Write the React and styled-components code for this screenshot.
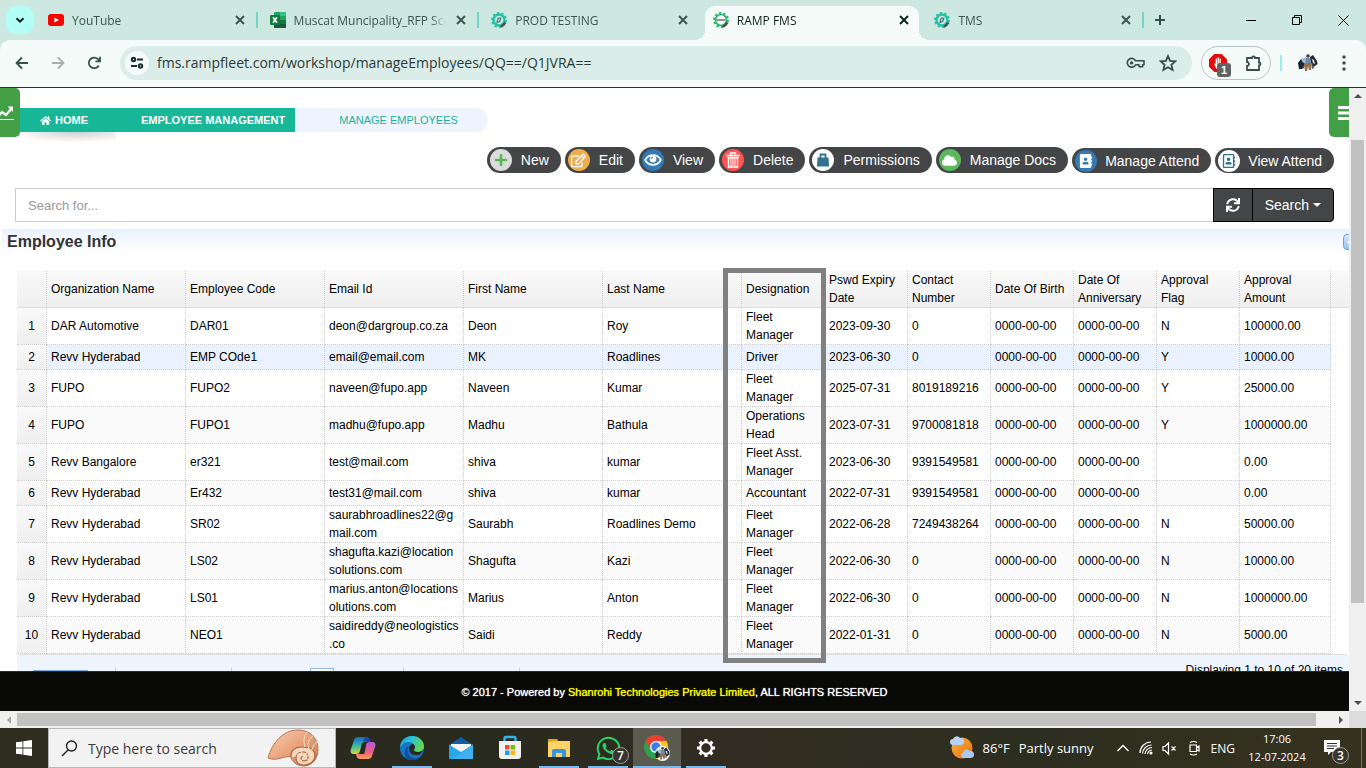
import styled, { createGlobalStyle, css } from "styled-components";
import {
  FaAddressBook,
  FaCloud,
  FaHome,
  FaPlus,
  FaRegAddressBook,
  FaRegEdit,
  FaSync,
  FaWhatsapp,
} from "react-icons/fa";

const GlobalStyle = createGlobalStyle`
  * {
    box-sizing: border-box;
  }
  html, body, #root {
    height: 100%;
  }
  body {
    margin: 0;
    overflow: hidden;
    background: #fff;
    font-family: "Liberation Sans", Arial, sans-serif;
  }
  button, input, select {
    font-family: inherit;
    margin: 0;
  }
  svg {
    display: block;
    flex: none;
  }
`;

const uiFont = `"Open Sans", "Noto Sans", sans-serif`;

const Screen = styled.div`
  display: flex;
  flex-direction: column;
  height: 100vh;
`;

/* browser window */

const TabStrip = styled.header`
  display: flex;
  align-items: center;
  height: 40px;
  flex: none;
  padding-left: 6px;
  background: #cce8e1;
  font-family: ${uiFont};
`;

const PlainButton = styled.button`
  display: flex;
  align-items: center;
  justify-content: center;
  flex: none;
  width: ${({ $w }) => $w || 28}px;
  height: ${({ $h }) => $h || 28}px;
  padding: 0;
  border: none;
  border-radius: ${({ $radius }) => $radius || 0}px;
  background: ${({ $bg }) => $bg || "transparent"};
  color: ${({ $color }) => $color || "#35504a"};
  cursor: pointer;
`;

const Tabs = styled.div`
  display: flex;
  flex: 1 1 auto;
  max-width: 1110px;
  height: 100%;
  padding: 6px 0 0 2px;
`;

const Tab = styled.div`
  position: relative;
  display: flex;
  align-items: center;
  flex: 1 1 0;
  min-width: 0;
  gap: 8px;
  padding: 0 11px 6px 12px;
  color: #3b5650;

  ${({ $divider }) =>
    $divider &&
    css`
      &::after {
        content: "";
        position: absolute;
        right: 0;
        top: 6px;
        width: 2px;
        height: 16px;
        background: #74d6c8;
      }
    `}

  ${({ $active }) =>
    $active &&
    css`
      margin: 0 3px 0 4px;
      padding: 0 8px 6px;
      border-radius: 10px 10px 0 0;
      background: #f4fbf9;
      color: #10201c;
      &::before,
      &::after {
        content: "";
        position: absolute;
        bottom: 0;
        width: 10px;
        height: 10px;
      }
      &::before {
        right: 100%;
        background: radial-gradient(circle at 0 0, #cce8e1 10px, #f4fbf9 10px);
      }
      &::after {
        left: 100%;
        background: radial-gradient(
          circle at 100% 0,
          #cce8e1 10px,
          #f4fbf9 10px
        );
      }
    `}
`;

const TabTitle = styled.span`
  flex: 1;
  min-width: 0;
  padding-top: 2px;
  overflow: hidden;
  white-space: nowrap;
  font-size: 12px;
  line-height: 16px;
  mask-image: linear-gradient(90deg, #000 90%, transparent);
`;

const WindowButtons = styled.div`
  display: flex;
  margin-left: auto;
`;

const AddressRow = styled.div`
  background: #cce8e1;
  flex: none;
`;

const Toolbar = styled.div`
  display: flex;
  align-items: center;
  height: 48px;
  padding: 0 0 2px 4px;
  border-radius: 10px 10px 0 0;
  border-bottom: 1px solid #2c2f33;
  background: #f4fbf9;
`;

const Omnibox = styled.div`
  display: flex;
  align-items: center;
  flex: 1;
  height: 34px;
  margin: 0 9px 0 8px;
  padding: 0 8px 0 5px;
  border-radius: 17px;
  background: #dbede8;
`;

const UrlInput = styled.input`
  flex: 1;
  min-width: 0;
  height: 24px;
  padding: 0 0 0 8px;
  border: none;
  outline: none;
  background: transparent;
  color: #2c3b38;
  font-family: ${uiFont};
  font-size: 14px;
`;

const Extensions = styled.div`
  display: flex;
  align-items: center;
  justify-content: space-between;
  width: 70px;
  height: 34px;
  padding: 0 2px;
  border: 1px solid #b9c5c2;
  border-radius: 17px;
`;

const ToolbarRule = styled.span`
  width: 2px;
  height: 16px;
  margin: 0 12px 0 9px;
  background: #93f0e2;
`;

const BadgeHolder = styled.span`
  position: relative;
  display: flex;
`;

const Badge = styled.span`
  position: absolute;
  left: 8px;
  top: 9px;
  width: 14px;
  height: 14px;
  border-radius: 3px;
  background: #5f6362;
  color: #fff;
  font-size: 11px;
  font-weight: bold;
  line-height: 14px;
  text-align: center;
`;

/* page */

const Viewport = styled.div`
  display: grid;
  grid-template-columns: minmax(0, 1fr) 17px;
  grid-template-rows: minmax(0, 1fr) 17px;
  flex: 1;
  min-height: 0;
`;

const Page = styled.div`
  position: relative;
  display: flex;
  flex-direction: column;
  min-height: 0;
  overflow: hidden;
  background: #fff;
`;

const PageContent = styled.main`
  flex: 1;
  min-height: 0;
  overflow: hidden;
  padding-top: 20px;
`;

const SideTab = styled.button`
  position: absolute;
  z-index: 2;
  top: 0;
  ${({ $side }) => $side}: 0;
  display: flex;
  align-items: center;
  justify-content: flex-start;
  width: 20px;
  height: 49px;
  padding: 0;
  padding-left: ${({ $side }) => ($side === "right" ? "9px" : "0")};
  border: none;
  border-radius: ${({ $side }) =>
    $side === "right" ? "5px 0 0 5px" : "0 5px 5px 0"};
  background: #439f46;
  color: #fff;
  overflow: hidden;
`;

const Breadcrumb = styled.nav`
  display: flex;
  width: max-content;
  margin-left: 15px;
`;

const Crumb = styled.a`
  position: relative;
  display: flex;
  align-items: center;
  gap: 4px;
  height: 24px;
  padding: ${({ $pad }) => $pad};
  background: #17b798;
  color: #fff;
  font-size: 11px;
  font-weight: bold;
  text-decoration: none;

  ${({ $current }) =>
    $current &&
    css`
      border-radius: 0 12px 12px 0;
      background: #edf4ff;
      color: #1fb297;
      font-weight: normal;
    `}

  ${({ $shadow }) =>
    $shadow &&
    css`
      &::after {
        content: "";
        position: absolute;
        left: 0;
        right: 0;
        top: 100%;
        height: 10px;
        background: radial-gradient(
          ellipse at 60% 0,
          #cfcfcf,
          #efefef 50%,
          #fff 75%
        );
      }
    `}
`;

const Actions = styled.div`
  display: flex;
  align-items: flex-end;
  justify-content: flex-end;
  gap: 4px;
  margin: 15px 15px 0;
`;

const ActionButton = styled.button`
  display: flex;
  align-items: center;
  gap: ${({ $compact }) => ($compact ? 8 : 9)}px;
  height: ${({ $compact }) => ($compact ? 25 : 26)}px;
  padding: 0 12px 0 3px;
  border: none;
  border-radius: 13px;
  background: #444546;
  color: #fff;
  font-size: 14px;
  white-space: nowrap;
  cursor: pointer;
`;

const ActionIcon = styled.span`
  display: flex;
  align-items: center;
  justify-content: center;
  width: 22px;
  height: 22px;
  border-radius: 50%;
  background: ${({ $bg }) => $bg};
  color: ${({ $color }) => $color || "#fff"};
`;

const SearchForm = styled.form`
  display: flex;
  height: 34px;
  margin: 15px 15px 0;
`;

const SearchInput = styled.input`
  flex: 1;
  min-width: 0;
  padding: 0 12px;
  border: 1px solid #ccc;
  border-right: none;
  outline: none;
  font-size: 13px;
  &::placeholder {
    color: #999;
    opacity: 1;
  }
`;

const SearchButton = styled.button`
  display: flex;
  align-items: center;
  justify-content: center;
  gap: 4px;
  padding: 0 12px;
  border: 1px solid #000;
  border-radius: ${({ $last }) => ($last ? "0 4px 4px 0" : "0")};
  margin-left: ${({ $last }) => ($last ? "-1px" : "0")};
  background: #444546;
  color: #fff;
  font-size: 14px;
  cursor: pointer;
`;

const Caret = styled.span`
  border: 4px solid transparent;
  border-top-color: #fff;
  border-bottom: none;
`;

const PanelHeader = styled.div`
  position: relative;
  height: 24px;
  margin: 7px 0 0 2px;
  padding-left: 5px;
  background: linear-gradient(#eaf2ff, #fff);
`;

const PanelTitle = styled.h2`
  margin: 0;
  color: #333;
  font-size: 16px;
  line-height: 26px;
`;

const CollapseButton = styled.button`
  position: absolute;
  right: -10px;
  top: 5px;
  width: 16px;
  height: 16px;
  padding: 0 0 0 3px;
  border: 1px solid #6f9fd8;
  border-radius: 4px;
  background: linear-gradient(#d6e7fb, #9cc3f3);
  color: #fff;
`;

const GridArea = styled.div`
  position: relative;
  margin: 18px 0 0 17px;
`;

const Grid = styled.table`
  width: 100%;
  table-layout: fixed;
  border-spacing: 0;
  color: #000;
  font-size: 12px;
  line-height: 18px;
`;

const HeadCell = styled.th`
  height: 37px;
  padding: 0 4px;
  border-right: ${({ $filler }) => ($filler ? "none" : "1px dotted #ccc")};
  border-bottom: 1px solid #ddd;
  background: linear-gradient(#f9f9f9, #efefef);
  font-weight: normal;
  text-align: left;
`;

const Row = styled.tr`
  background: ${({ $hover, $even }) =>
    $hover ? "#eaf2ff" : $even ? "#fafafa" : "#fff"};
`;

const Cell = styled.td`
  height: 25px;
  padding: 0 4px;
  border-right: 1px dotted #ccc;
  border-bottom: 1px dotted #ccc;
  overflow-wrap: anywhere;
`;

const RowNumber = styled(Cell)`
  padding: 0;
  background: linear-gradient(#f9f9f9, #efefef);
  text-align: center;
`;

const Filler = styled.td`
  background: #fff;
`;

const ColumnMarker = styled.div`
  position: absolute;
  left: 706px;
  top: -3px;
  bottom: -9px;
  width: 103px;
  border: 5px solid #808080;
  pointer-events: none;
`;

const Pager = styled.div`
  display: flex;
  align-items: center;
  height: 31px;
  margin-left: 17px;
  padding: 0 6px 0 16px;
  border-top: 1px solid #ddd;
  border-radius: 5px 5px 0 0;
  background: #eff5ff;
  font-size: 12px;
`;

const PageSize = styled.select`
  width: 55px;
  height: 20px;
  margin-top: 20px;
  border: 1px solid #7fa9dc;
  background: #fff;
`;

const PagerRule = styled.span`
  width: 1px;
  height: 24px;
  margin-top: 20px;
  margin-left: ${({ $before }) => $before}px;
  background: #ccc;
`;

const PageNumber = styled.input`
  width: 24px;
  height: 24px;
  margin: 20px 0 0 78px;
  padding: 0 4px;
  border: 1px solid #95b8e7;
`;

const PagerInfo = styled.span`
  margin-left: auto;
`;

const Footer = styled.footer`
  display: flex;
  align-items: center;
  justify-content: center;
  height: 40px;
  flex: none;
  border-top: 1px solid #2a2a2a;
  background: #090907;
  color: #fff;
  font-size: 11px;
  text-shadow: 0 0 1px currentColor;
  p {
    margin: 0;
  }
  a {
    color: #ff0;
    text-decoration: none;
  }
`;

/* scrollbars */

const ScrollTrack = styled.div`
  display: flex;
  flex-direction: ${({ $vertical }) => ($vertical ? "column" : "row")};
  padding: ${({ $vertical }) => ($vertical ? "0 2px" : "2px 0")};
  background: #f0f0f0;
`;

const ScrollArrow = styled.button`
  display: flex;
  align-items: center;
  justify-content: center;
  flex: none;
  width: ${({ $vertical }) => ($vertical ? 13 : 17)}px;
  height: ${({ $vertical }) => ($vertical ? 17 : 13)}px;
  padding: 0;
  border: none;
  background: transparent;
  color: ${({ $dim }) => ($dim ? "#a3a3a3" : "#505050")};
`;

const ScrollSpace = styled.div`
  flex: ${({ $size }) => $size} 1 0;
  background: ${({ $thumb }) => ($thumb ? "#c1c1c1" : "transparent")};
`;

const ScrollCorner = styled.div`
  background: #dcdcdc;
`;

/* taskbar */

const Taskbar = styled.div`
  display: flex;
  align-items: stretch;
  height: 40px;
  flex: none;
  background: linear-gradient(90deg, #2f2c20, #292a1e 35%, #322d22 55%, #2c2e20 75%, #36321f);
  color: #fff;
  font-family: ${uiFont};
`;

const TaskSearch = styled.label`
  display: flex;
  align-items: center;
  width: 288px;
  padding: 0 14px 0 12px;
  border: 1px solid #b5b5b1;
  background: #f2f2f2;
  color: #222;
`;

const TaskSearchInput = styled.input`
  flex: 1;
  min-width: 0;
  padding: 0 0 0 10px;
  border: none;
  outline: none;
  background: transparent;
  font-family: ${uiFont};
  font-size: 14px;
  &::placeholder {
    color: #3c3c3c;
    opacity: 1;
  }
`;

const TaskApps = styled.div`
  display: flex;
  gap: 1px;
  margin-left: 3px;
`;

const TaskApp = styled.button`
  position: relative;
  display: flex;
  align-items: center;
  justify-content: center;
  width: 48px;
  padding: 0;
  border: none;
  background: ${({ $active }) => ($active ? "#5a5a4e" : "transparent")};
  color: #fff;
  &::after {
    content: "";
    position: absolute;
    bottom: 0;
    left: ${({ $active }) => ($active ? 0 : 4)}px;
    right: ${({ $active }) => ($active ? 0 : 4)}px;
    height: 2px;
    background: ${({ $running }) => ($running ? "#76b9ed" : "transparent")};
  }
`;

const CountBubble = styled.span`
  position: absolute;
  right: ${({ $right }) => $right}px;
  bottom: 4px;
  width: 17px;
  height: 17px;
  border: 1px solid #a0a09a;
  border-radius: 50%;
  background: #35352d;
  color: #fff;
  font-size: 12px;
  font-weight: 600;
  line-height: 15px;
  text-align: center;
`;

const Tray = styled.div`
  display: flex;
  align-items: center;
  margin-left: auto;
  font-size: 12px;
`;

const Weather = styled.div`
  display: flex;
  align-items: center;
  gap: 9px;
  margin-right: 22px;
  font-size: 13px;
`;

const TrayIcons = styled.div`
  display: flex;
  align-items: center;
  gap: 9px;
`;

const Clock = styled.div`
  width: 66px;
  margin-left: 9px;
  font-size: 11px;
  line-height: 18px;
  text-align: center;
`;

const Notifications = styled.button`
  position: relative;
  display: flex;
  align-items: center;
  align-self: stretch;
  width: 52px;
  padding: 0 0 0 14px;
  border: none;
  border-right: 1px solid #77756a;
  background: transparent;
  color: #fff;
  margin-right: 4px;
`;

/* icons */

const Stroke = ({ size = 16, box = 16, width = 2, d, children }) => (
  <svg
    width={size}
    height={size}
    viewBox={`0 0 ${box} ${box}`}
    fill="none"
    stroke="currentColor"
    strokeWidth={width}
    aria-hidden="true"
  >
    {d && <path d={d} />}
    {children}
  </svg>
);

const CloseIcon = () => <Stroke size={10} box={10} d="M1 1l8 8M9 1l-8 8" width={2} />;

const YouTubeIcon = () => (
  <svg width="16" height="16" viewBox="0 0 16 16">
    <rect y="2" width="16" height="12" rx="3" fill="#f00" />
    <path d="M6.3 5.4v5.2L11 8z" fill="#fff" />
  </svg>
);

const ExcelIcon = () => (
  <svg width="16" height="16" viewBox="0 0 16 16">
    <rect x="4" width="12" height="16" rx="1" fill="#21a366" />
    <path d="M10 0h5a1 1 0 0 1 1 1v3h-6z" fill="#33c481" />
    <path d="M4 8h6v4H4zM4 12h12v3a1 1 0 0 1-1 1H5a1 1 0 0 1-1-1z" fill="#185c37" />
    <path d="M10 8h6v4h-6z" fill="#107c41" />
    <rect y="3" width="10" height="10" rx="1" fill="#107c41" />
    <path d="M3 5.3l4 5.4M7 5.3l-4 5.4" stroke="#fff" strokeWidth="1.6" />
  </svg>
);

const GearLogo = ({ ramp }) => (
  <svg width="16" height="16" viewBox="0 0 16 16" fill="none">
    <circle
      cx="8"
      cy="8"
      r="7"
      stroke={ramp ? "#27b36a" : "#1fc4a4"}
      strokeWidth="2"
      strokeDasharray="2.2 2.2"
    />
    <circle
      cx="8"
      cy="8"
      r="5.5"
      fill={ramp ? "#f4fbf9" : "none"}
      stroke={ramp ? "#27b36a" : "#1fc4a4"}
      strokeWidth={ramp ? 1.6 : 2.4}
    />
    <path d="M14.500 10.500l-4.500 4.500" stroke="#4c4f50" strokeWidth="2.400" />
    {ramp ? (
      <path d="M3.500 8h9" stroke="#6d7472" strokeWidth="1.500" />
    ) : (
      <path d="M6 10.500l1.200-4.500h2.500l-1 3.500z" stroke="#427b7b" strokeWidth="1.200" />
    )}
  </svg>
);

const TuneIcon = () => (
  <Stroke size={14} box={14} width={2}>
    <circle cx="3.5" cy="3.5" r="1.7" />
    <circle cx="10.5" cy="10" r="1.7" />
    <path d="M7 3.5h6M1 10h6" />
  </Stroke>
);

const KeyIcon = () => (
  <svg width="20" height="14" viewBox="0 0 20 14" fill="none" stroke="currentColor">
    <path
      d="M9.6 4.8H18v4h-1.4v2H13v-2H9.6A4.4 4.4 0 1 1 9.6 4.8z"
      strokeWidth="1.6"
      strokeLinejoin="round"
    />
    <circle cx="5.6" cy="6.9" r="1.7" fill="currentColor" stroke="none" />
  </svg>
);

const StarIcon = () => (
  <Stroke
    size={18}
    box={18}
    width={1.8}
    d="M9 2l2.1 4.8 5.3.5-4 3.5 1.2 5.2L9 13.300l-4.600 2.700 1.200-5.200-4-3.500 5.300-.5z"
  />
);

const AdblockIcon = () => (
  <svg width="18" height="18" viewBox="0 0 16 16">
    <path d="M4.700 0h6.600L16 4.700v6.600L11.300 16H4.700L0 11.300V4.700z" fill="#e40d0d" />
    <path
      d="M6.500 10V4.500M8.200 10V3.500M9.900 10V4.500"
      stroke="#fff"
      strokeWidth="1.200"
      strokeLinecap="round"
    />
    <path d="M4.500 8.500l2 4.500h3l1.500-4z" fill="#fff" />
  </svg>
);

const PuzzleIcon = () => (
  <Stroke
    size={18}
    box={18}
    width={1.8}
    d="M2 4h5a1.500 1.500 0 0 1 3 0h4v4.500a1.500 1.500 0 0 1 0 3V16H2v-4a2 2 0 0 0 0-4z"
  />
);

const PhotoAvatar = ({ size = 20 }) => (
  <svg width={size} height={size} viewBox="0 0 20 20">
    <circle cx="10" cy="10" r="10" fill="#f1f6fa" />
    <path d="M0 10l3-4 3 1 1 6-3 3H1z" fill="#1b2230" />
    <path d="M12 4l3-2 4 6 .6 3-4 3-3-4z" fill="#252a35" />
    <path d="M3 6l5-2 2 3-5 3z" fill="#a8bccd" />
    <path d="M14 6l2 1 1 4-2-1z" fill="#dfe8ee" />
    <path d="M8 5h4l1 6H7z" fill="#6d8eb0" />
    <circle cx="10" cy="3" r="1.800" fill="#473a35" />
    <path d="M6 10h8l-1 7h-2l-1-4-1 5H7z" fill="#92714f" />
    <path d="M14 10l2 5-2 1zM4 12l2 1v3z" fill="#5c5147" />
  </svg>
);

const EyeIcon = () => (
  <svg width="18" height="12" viewBox="0 0 18 12">
    <path
      d="M1.200 6C3 2.800 5.800 1.200 9 1.200S15 2.800 16.800 6C15 9.200 12.200 10.800 9 10.800S3 9.200 1.200 6z"
      fill="none"
      stroke="currentColor"
      strokeWidth="1.800"
    />
    <circle cx="9" cy="5" r="3.400" fill="currentColor" />
    <path d="M7 5a2 2 0 0 1 2-2" stroke="#337ab7" fill="none" />
  </svg>
);

const TrashIcon = () => (
  <svg width="14" height="16" viewBox="0 0 14 16" fill="none" stroke="currentColor">
    <path d="M.5 3.500h13M4.500 3V1h5v2M2.500 6h9v9h-9z" strokeWidth="1.400" />
    <path d="M5 7v7M7 7v7M9 7v7" strokeWidth="1" />
    <path d="M1 5.200h12" strokeWidth="1" />
  </svg>
);

const LockIcon = () => (
  <svg width="14" height="16" viewBox="0 0 14 16">
    <path d="M4.500 7V2.500h5V7" fill="none" stroke="#31708f" strokeWidth="1.800" />
    <path d="M1.500 5.500h11l.5 9H1z" fill="#31708f" />
  </svg>
);

const TrendIcon = () => (
  <svg width="15" height="16" viewBox="0 0 15 16" fill="none" stroke="#fff">
    <path d="M-2 12l4-5 4 3 6-7" strokeWidth="2.200" />
    <path d="M7.500 1.500H13v5.500z" fill="#fff" stroke="none" />
    <path d="M0 14.500h14" strokeWidth="1.200" />
  </svg>
);

const MenuIcon = () => (
  <svg width="16" height="14" viewBox="0 0 16 14" fill="currentColor">
    <path d="M0 0h16v3H0zM0 5.500h16v3H0zM0 11h16v3H0z" />
  </svg>
);

const arrows = {
  up: "M0 5l4-4 4 4z",
  down: "M0 2l4 4 4-4z",
  left: "M6 0L2 4l4 4z",
  right: "M2 0l4 4-4 4z",
};

const Arrow = ({ dir }) => (
  <svg width="8" height="8" viewBox="0 0 8 8" fill="currentColor">
    <path d={arrows[dir]} />
  </svg>
);

const WindowsIcon = () => (
  <svg width="16" height="16" viewBox="0 0 16 16" fill="#fff">
    <path d="M0 2.300L6.500 1.400v6.100H0zM7.300 1.300L16 0v7.500H7.300zM0 8.400h6.500v6.200L0 13.700zM7.300 8.400H16V16l-8.700-1.300z" />
  </svg>
);

const NautilusIcon = () => (
  <svg width="54" height="38" viewBox="0 0 54 38">
    <defs>
      <linearGradient id="shell" x1="0" y1="0" x2="1" y2="1">
        <stop offset="0" stopColor="#f7cfb2" />
        <stop offset="0.5" stopColor="#e9a27b" />
        <stop offset="1" stopColor="#c9794f" />
      </linearGradient>
    </defs>
    <path
      d="M1 29C5 14 16 1 31 1c12 0 20 8 20 19 0 10-6 17-14 17-7 0-12-4-13-9-7-2-14 5-23 1z"
      fill="url(#shell)"
      stroke="#b87450"
    />
    <path
      d="M24 28c-1-7 5-10 11-10 8 0 13 3 13 9 0 5-5 9-11 9-5 0-8-3-8-7s3-6 7-6c3 0 5 2 5 5s-2 4-4 4c-3 0-4-4-1-5"
      fill="#f5d5ba"
      stroke="#a7643f"
      strokeWidth="1.200"
    />
    <path
      d="M42 20c-2-6 0-10 4-13M45 21c0-3 2-6 5-8M38 18c-2-6-1-11 2-15M29 25l7 2M33 19l2 6M42 19l-3 6M47 24l-7 3M44 33l-5-4M33 34l3-5"
      fill="none"
      stroke="#fbe3cf"
      strokeWidth="0.900"
    />
  </svg>
);

const CopilotIcon = () => (
  <svg width="26" height="26" viewBox="0 0 26 26">
    <defs>
      <linearGradient id="copA" x1="0" y1="0" x2="0" y2="1">
        <stop offset="0" stopColor="#1667c9" />
        <stop offset="0.500" stopColor="#34b9a8" />
        <stop offset="1" stopColor="#d8d83d" />
      </linearGradient>
      <linearGradient id="copB" x1="0" y1="0" x2="0" y2="1">
        <stop offset="0" stopColor="#b35ae0" />
        <stop offset="0.600" stopColor="#ef5e80" />
        <stop offset="1" stopColor="#f7a14b" />
      </linearGradient>
    </defs>
    <path d="M8 2h8c2 0 3 1 3.500 3l.7 2H15c-2 0-3 1-3.500 3L10 16c-.6 2-1.500 3-3.500 3H4c-3 0-4-2-3-5l3-9c.6-2 2-3 4-3z" fill="url(#copA)" />
    <path d="M18 24h-8c-2 0-3-1-3.500-3L6 19h5c2 0 3-1 3.500-3L16 10c.6-2 1.500-3 3.500-3H22c3 0 4 2 3 5l-3 9c-.6 2-2 3-4 3z" fill="url(#copB)" />
    <path d="M15 2c3 0 4 1 5 5h-3l-4-1z" fill="#1648b8" />
    <path d="M11.500 10h4.500l-1.700 9h-4z" fill="#29291f" />
  </svg>
);

const EdgeIcon = () => (
  <svg width="24" height="24" viewBox="0 0 24 24">
    <defs>
      <linearGradient id="edgeTop" x1="0" y1="0" x2="1" y2="0.400">
        <stop offset="0" stopColor="#1b9de2" />
        <stop offset="0.500" stopColor="#2cc3d2" />
        <stop offset="1" stopColor="#62d84e" />
      </linearGradient>
    </defs>
    <circle cx="12" cy="12" r="12" fill="#1675c5" />
    <path d="M0 12C0 5 5 0 12 0s12 5 12 10c0 4-3 6-6 6-3 0-4-1-4-2s1-1 1-3c0-3-3-5-7-5-4 0-7 3-8 6z" fill="url(#edgeTop)" />
    <path d="M14 14c0 1 1 2 4 2 2 0 4-1 5-2-1 3-3 5-5 5-5 1-9-2-9-6 0-2 1-4 3-5 2 0 3 2 3 3s-1 2-1 3z" fill="#29291f" />
    <path d="M9 10c-3 4-1 10 4 12 3 1 6 0 8-2-2 3-5 4-9 4C7 24 4 20 5 15c1-4 3-5 4-5z" fill="#124e99" />
  </svg>
);

const MailIcon = () => (
  <svg width="24" height="24" viewBox="0 0 24 24">
    <path d="M0 9L12 1l12 8v5H0z" fill="#0f5ea5" />
    <path d="M2 8h20v8H2z" fill="#f3f6f8" />
    <path d="M0 8.500l12 7.500 12-7.500V23H0z" fill="#2aa6e6" />
    <path d="M24 8.500V23H4z" fill="#49b8f0" opacity="0.700" />
  </svg>
);

const StoreIcon = () => (
  <svg width="24" height="26" viewBox="0 0 24 26">
    <path d="M6.500 8V3.500C6.500 2.500 7 2 8 2h8c1 0 1.500.500 1.500 1.500V8" fill="none" stroke="#38b0ea" strokeWidth="2.400" />
    <path d="M1 6h22v15a3 3 0 0 1-3 3H4a3 3 0 0 1-3-3z" fill="#f1f1f1" />
    <path d="M7 10h4.500v4.500H7z" fill="#f04c26" />
    <path d="M12.500 10H17v4.500h-4.500z" fill="#78b816" />
    <path d="M7 15.500h4.500V20H7z" fill="#1ba3ea" />
    <path d="M12.500 15.500H17V20h-4.500z" fill="#fbb514" />
  </svg>
);

const FolderIcon = () => (
  <svg width="22" height="20" viewBox="0 0 22 20">
    <path d="M0 1h9l2 3H0z" fill="#e6a20f" />
    <path d="M0 4l10-1h12v16H0z" fill="#fdd367" />
    <path d="M4 19v-6a2 2 0 0 1 2-2h10a2 2 0 0 1 2 2v6h-4v-4H8v4z" fill="#3a95dc" />
  </svg>
);

const ChromeIcon = () => (
  <svg width="26" height="26" viewBox="0 0 26 26">
    <circle cx="12" cy="12" r="12" fill="#2da04b" />
    <path d="M12 6h10.400A12 12 0 0 1 12 24l5-9z" fill="#fbc31b" />
    <path d="M7 15L1.600 6A12 12 0 0 1 22.400 6H12z" fill="#e8412f" />
    <circle cx="12" cy="12" r="6" fill="#fff" />
    <circle cx="12" cy="12" r="4.700" fill="#3b7de9" />
    <g transform="translate(11 11)">
      <PhotoAvatar size={15} />
    </g>
  </svg>
);

const SettingsIcon = () => (
  <svg width="20" height="20" viewBox="0 0 20 20" fill="none" stroke="#fff">
    <circle cx="10" cy="10" r="5.800" strokeWidth="2.200" />
    <path
      d="M10 4V1M10 19v-3M4 10H1M19 10h-3M5.800 5.800L3.600 3.600M16.400 16.400l-2.200-2.200M14.200 5.800l2.200-2.200M3.600 16.400l2.200-2.200"
      strokeWidth="3.200"
    />
  </svg>
);

const WeatherIcon = () => (
  <svg width="24" height="24" viewBox="0 0 24 24">
    <defs>
      <linearGradient id="sun" x1="0" y1="0" x2="1" y2="1">
        <stop offset="0" stopColor="#f9b53a" />
        <stop offset="1" stopColor="#ee6c13" />
      </linearGradient>
    </defs>
    <circle cx="12" cy="12" r="10.500" fill="url(#sun)" />
    <path d="M3 9a3 3 0 0 1 0-6 4 4 0 0 1 7-1 3.500 3.500 0 0 1 1 7z" fill="#b7d2f5" />
    <path d="M13 22a3 3 0 0 1 0-5.500 4 4 0 0 1 7-1.500 3.500 3.500 0 0 1 1 7z" fill="#a9c8f2" />
  </svg>
);

const ChatIcon = () => (
  <svg width="16" height="16" viewBox="0 0 16 16">
    <path d="M0 0h16v12H7l-3 3v-3H0z" fill="#fff" />
    <path d="M3 3.500h10M3 6h10M3 8.500h7" stroke="#333127" />
  </svg>
);

/* data */

const tabs = [
  { title: "YouTube", icon: <YouTubeIcon />, divider: true },
  { title: "Muscat Muncipality_RFP Scope", icon: <ExcelIcon />, divider: true },
  { title: "PROD TESTING", icon: <GearLogo /> },
  { title: "RAMP FMS", icon: <GearLogo ramp />, active: true },
  { title: "TMS", icon: <GearLogo />, divider: true },
];

const actions = [
  { label: "New", bg: "#dcdcdc", color: "#5cb85c", icon: <FaPlus size={14} /> },
  { label: "Edit", bg: "#f0ad4e", icon: <FaRegEdit size={15} /> },
  { label: "View", bg: "#337ab7", icon: <EyeIcon /> },
  { label: "Delete", bg: "#ff5454", icon: <TrashIcon /> },
  { label: "Permissions", bg: "#fff", icon: <LockIcon /> },
  { label: "Manage Docs", bg: "#5cb85c", icon: <FaCloud size={15} /> },
  {
    label: "Manage Attend",
    bg: "#337ab7",
    icon: <FaAddressBook size={14} />,
    compact: true,
  },
  {
    label: "View Attend",
    bg: "#fff",
    color: "#31708f",
    icon: <FaRegAddressBook size={14} />,
    compact: true,
  },
];

const columns = [
  { title: "Organization Name", width: 139 },
  { title: "Employee Code", width: 139 },
  { title: "Email Id", width: 139 },
  { title: "First Name", width: 139 },
  { title: "Last Name", width: 139 },
  { title: "Designation", width: 83 },
  { title: "Pswd Expiry Date", width: 83 },
  { title: "Contact Number", width: 83 },
  { title: "Date Of Birth", width: 83 },
  { title: "Date Of Anniversary", width: 83 },
  { title: "Approval Flag", width: 83 },
  { title: "Approval Amount", width: 91 },
];

const noDate = "0000-00-00";

const employees = [
  ["DAR Automotive", "DAR01", "deon@dargroup.co.za", "Deon", "Roy", "Fleet Manager", "2023-09-30", "0", noDate, noDate, "N", "100000.00"],
  ["Revv Hyderabad", "EMP COde1", "email@email.com", "MK", "Roadlines", "Driver", "2023-06-30", "0", noDate, noDate, "Y", "10000.00"],
  ["FUPO", "FUPO2", "naveen@fupo.app", "Naveen", "Kumar", "Fleet Manager", "2025-07-31", "8019189216", noDate, noDate, "Y", "25000.00"],
  ["FUPO", "FUPO1", "madhu@fupo.app", "Madhu", "Bathula", "Operations Head", "2023-07-31", "9700081818", noDate, noDate, "Y", "1000000.00"],
  ["Revv Bangalore", "er321", "test@mail.com", "shiva", "kumar", "Fleet Asst. Manager", "2023-06-30", "9391549581", noDate, noDate, "", "0.00"],
  ["Revv Hyderabad", "Er432", "test31@mail.com", "shiva", "kumar", "Accountant", "2022-07-31", "9391549581", noDate, noDate, "", "0.00"],
  ["Revv Hyderabad", "SR02", "saurabhroadlines22@gmail.com", "Saurabh", "Roadlines Demo", "Fleet Manager", "2022-06-28", "7249438264", noDate, noDate, "N", "50000.00"],
  ["Revv Hyderabad", "LS02", "shagufta.kazi@locationsolutions.com", "Shagufta", "Kazi", "Fleet Manager", "2022-06-30", "0", noDate, noDate, "N", "10000.00"],
  ["Revv Hyderabad", "LS01", "marius.anton@locationsolutions.com", "Marius", "Anton", "Fleet Manager", "2022-06-30", "0", noDate, noDate, "N", "1000000.00"],
  ["Revv Hyderabad", "NEO1", "saidireddy@neologistics.co", "Saidi", "Reddy", "Fleet Manager", "2022-01-31", "0", noDate, noDate, "N", "5000.00"],
];

const apps = [
  { name: "Copilot", icon: <CopilotIcon /> },
  { name: "Edge", icon: <EdgeIcon />, running: true },
  { name: "Mail", icon: <MailIcon /> },
  { name: "Store", icon: <StoreIcon /> },
  { name: "File Explorer", icon: <FolderIcon />, running: true },
  {
    name: "WhatsApp",
    icon: <FaWhatsapp size={27} color="#25d366" />,
    running: true,
    count: 7,
  },
  { name: "Chrome", icon: <ChromeIcon />, running: true, active: true },
  { name: "Settings", icon: <SettingsIcon />, running: true },
];

function BrowserHeader() {
  return (
    <>
      <TabStrip>
        <PlainButton $bg="#b3fff5" $radius={10} $color="#10201c" aria-label="Search tabs">
          <Stroke size={10} box={10} d="M1.500 3.200L5 6.700l3.500-3.500" />
        </PlainButton>
        <Tabs>
          {tabs.map((tab) => (
            <Tab key={tab.title} $active={tab.active} $divider={tab.divider}>
              {tab.icon}
              <TabTitle>{tab.title}</TabTitle>
              <PlainButton $w={14} $h={16} $color="inherit" aria-label={`Close ${tab.title}`}>
                <CloseIcon />
              </PlainButton>
            </Tab>
          ))}
        </Tabs>
        <PlainButton $w={32} aria-label="New tab">
          <Stroke size={12} box={12} d="M6 1v10M1 6h10" />
        </PlainButton>
        <WindowButtons>
          <PlainButton $w={46} $color="#000" aria-label="Minimize">
            <Stroke size={10} box={10} width={1} d="M0 5.500h10" />
          </PlainButton>
          <PlainButton $w={46} $color="#000" aria-label="Restore">
            <Stroke size={10} box={10} width={1} d="M.5 2.500h7v7h-7zM2.500 2.500v-2h7v7h-2" />
          </PlainButton>
          <PlainButton $w={46} $color="#000" aria-label="Close">
            <Stroke size={11} box={11} width={1} d="M.5.500l10 10M10.500.500l-10 10" />
          </PlainButton>
        </WindowButtons>
      </TabStrip>
      <AddressRow>
        <Toolbar>
          <PlainButton $w={36} aria-label="Back">
            <Stroke d="M14 8H3M8 2.500L2.500 8 8 13.500" width={1.8} />
          </PlainButton>
          <PlainButton $w={36} $color="#a3b0ad" aria-label="Forward">
            <Stroke d="M2 8h11M8 2.500L13.500 8 8 13.500" width={1.8} />
          </PlainButton>
          <PlainButton $w={36} aria-label="Reload">
            <Stroke d="M12.800 10.500A5.300 5.300 0 1 1 12 4.200L14 6.200M14 1.800v4.600H9.400" width={1.8} />
          </PlainButton>
          <Omnibox>
            <PlainButton $w={24} $h={24} $radius={12} $bg="#f4fbf9" $color="#1d2f2b" aria-label="Site information">
              <TuneIcon />
            </PlainButton>
            <UrlInput
              aria-label="Address"
              defaultValue="fms.rampfleet.com/workshop/manageEmployees/QQ==/Q1JVRA=="
            />
            <PlainButton $w={32} aria-label="Passwords">
              <KeyIcon />
            </PlainButton>
            <PlainButton $w={32} aria-label="Bookmark">
              <StarIcon />
            </PlainButton>
          </Omnibox>
          <Extensions>
            <PlainButton $w={28} aria-label="Ad blocker">
              <BadgeHolder>
                <AdblockIcon />
                <Badge>1</Badge>
              </BadgeHolder>
            </PlainButton>
            <PlainButton $w={28} aria-label="Extensions">
              <PuzzleIcon />
            </PlainButton>
          </Extensions>
          <ToolbarRule />
          <PlainButton $w={28} aria-label="Profile">
            <PhotoAvatar />
          </PlainButton>
          <PlainButton $w={44} aria-label="Browser menu">
            <svg width="4" height="16" viewBox="0 0 4 16" fill="currentColor">
              <circle cx="2" cy="2" r="1.700" />
              <circle cx="2" cy="8" r="1.700" />
              <circle cx="2" cy="14" r="1.700" />
            </svg>
          </PlainButton>
        </Toolbar>
      </AddressRow>
    </>
  );
}

function EmployeeGrid() {
  return (
    <GridArea>
      <Grid>
        <colgroup>
          <col width="30" />
          {columns.map((column) => (
            <col key={column.title} width={column.width} />
          ))}
          <col />
        </colgroup>
        <thead>
          <tr>
            <HeadCell />
            {columns.map((column) => (
              <HeadCell key={column.title}>{column.title}</HeadCell>
            ))}
            <HeadCell $filler />
          </tr>
        </thead>
        <tbody>
          {employees.map((employee, index) => (
            <Row key={employee[1]} $even={index % 2 === 1} $hover={index === 1}>
              <RowNumber>{index + 1}</RowNumber>
              {employee.map((value, i) => (
                <Cell key={columns[i].title}>{value}</Cell>
              ))}
              <Filler />
            </Row>
          ))}
        </tbody>
      </Grid>
      <ColumnMarker />
    </GridArea>
  );
}

function EmployeePage() {
  return (
    <Page>
      <SideTab $side="left" aria-label="Reports">
        <TrendIcon />
      </SideTab>
      <SideTab $side="right" aria-label="Menu">
        <MenuIcon />
      </SideTab>
      <PageContent>
        <Breadcrumb>
          <Crumb href="#" $pad="0 28px 0 25px" $shadow>
            <FaHome size={11} />
            HOME
          </Crumb>
          <Crumb href="#" $pad="0 10px 0 25px">
            EMPLOYEE MANAGEMENT
          </Crumb>
          <Crumb href="#" $pad="0 30px 0 44px" $current>
            MANAGE EMPLOYEES
          </Crumb>
        </Breadcrumb>
        <Actions>
          {actions.map((action) => (
            <ActionButton key={action.label} $compact={action.compact}>
              <ActionIcon $bg={action.bg} $color={action.color}>
                {action.icon}
              </ActionIcon>
              {action.label}
            </ActionButton>
          ))}
        </Actions>
        <SearchForm onSubmit={(e) => e.preventDefault()}>
          <SearchInput placeholder="Search for..." aria-label="Search employees" />
          <SearchButton type="button" aria-label="Refresh">
            <FaSync size={14} />
          </SearchButton>
          <SearchButton $last>
            Search
            <Caret />
          </SearchButton>
        </SearchForm>
        <PanelHeader>
          <PanelTitle>Employee Info</PanelTitle>
          <CollapseButton aria-label="Collapse">
            <Stroke size={8} box={8} d="M1 5l3-3 3 3" />
          </CollapseButton>
        </PanelHeader>
        <EmployeeGrid />
        <Pager>
          <PageSize aria-label="Page size" />
          <PagerRule $before={27} />
          <PagerRule $before={115} />
          <PageNumber aria-label="Page" />
          <PagerRule $before={69} />
          <PagerRule $before={115} />
          <PagerInfo>Displaying 1 to 10 of 20 items</PagerInfo>
        </Pager>
      </PageContent>
      <Footer>
        <p>
          © 2017 - Powered by <a href="#">Shanrohi Technologies Private Limited</a>,
          ALL RIGHTS RESERVED
        </p>
      </Footer>
    </Page>
  );
}

function DesktopTaskbar() {
  return (
    <Taskbar>
      <PlainButton $w={48} $h={40} aria-label="Start">
        <WindowsIcon />
      </PlainButton>
      <TaskSearch>
        <Stroke size={17} box={17} width={1.4}>
          <circle cx="10.500" cy="6" r="5" />
          <path d="M7 10l-6 6" />
        </Stroke>
        <TaskSearchInput placeholder="Type here to search" aria-label="Search" />
        <NautilusIcon />
      </TaskSearch>
      <TaskApps>
        {apps.map((app) => (
          <TaskApp
            key={app.name}
            aria-label={app.name}
            $active={app.active}
            $running={app.running}
          >
            {app.icon}
            {app.count && <CountBubble $right={3}>{app.count}</CountBubble>}
          </TaskApp>
        ))}
      </TaskApps>
      <Tray>
        <Weather>
          <WeatherIcon />
          <span>86°F</span>
          <span>Partly sunny</span>
        </Weather>
        <TrayIcons>
          <Stroke size={14} box={14} width={1.3} d="M1.500 10L7 4.500l5.500 5.500" />
          <Stroke size={14} box={14} width={1.200}>
            <path d="M1 12A11 11 0 0 1 12 1M3.500 12.500A9 9 0 0 1 12.500 4M6 13a7 7 0 0 1 7-6.500M8.500 13A5 5 0 0 1 13 9" />
            <circle cx="12" cy="12" r="1" fill="currentColor" />
          </Stroke>
          <Stroke size={15} box={15} width={1.200} d="M1 5.500h2L6.500 2v11L3 9.500H1zM9.500 5.500l4 4M13.500 5.500l-4 4" />
          <Stroke size={16} box={16} width={1.200} d="M4 5h6.500v6.500H4zM10.500 7.500L13 6v5l-2.500-1.500M4 2.500q3.500-2 7 0M4 14q3.500 2 7 0" />
          <span>ENG</span>
        </TrayIcons>
        <Clock>
          17:06
          <br />
          12-07-2024
        </Clock>
        <Notifications aria-label="Notifications">
          <ChatIcon />
          <CountBubble $right={12}>3</CountBubble>
        </Notifications>
      </Tray>
    </Taskbar>
  );
}

function App() {
  return (
    <>
      <GlobalStyle />
      <Screen>
        <BrowserHeader />
        <Viewport>
          <EmployeePage />
          <ScrollTrack $vertical>
            <ScrollArrow $vertical aria-label="Scroll up">
              <Arrow dir="up" />
            </ScrollArrow>
            <ScrollSpace $size={35} />
            <ScrollSpace $size={463} $thumb />
            <ScrollSpace $size={91} />
            <ScrollArrow $vertical aria-label="Scroll down">
              <Arrow dir="down" />
            </ScrollArrow>
          </ScrollTrack>
          <ScrollTrack>
            <ScrollArrow $dim aria-label="Scroll left">
              <Arrow dir="left" />
            </ScrollArrow>
            <ScrollSpace $size={1299} $thumb />
            <ScrollSpace $size={16} />
            <ScrollArrow aria-label="Scroll right">
              <Arrow dir="right" />
            </ScrollArrow>
          </ScrollTrack>
          <ScrollCorner />
        </Viewport>
        <DesktopTaskbar />
      </Screen>
    </>
  );
}

export default App;
